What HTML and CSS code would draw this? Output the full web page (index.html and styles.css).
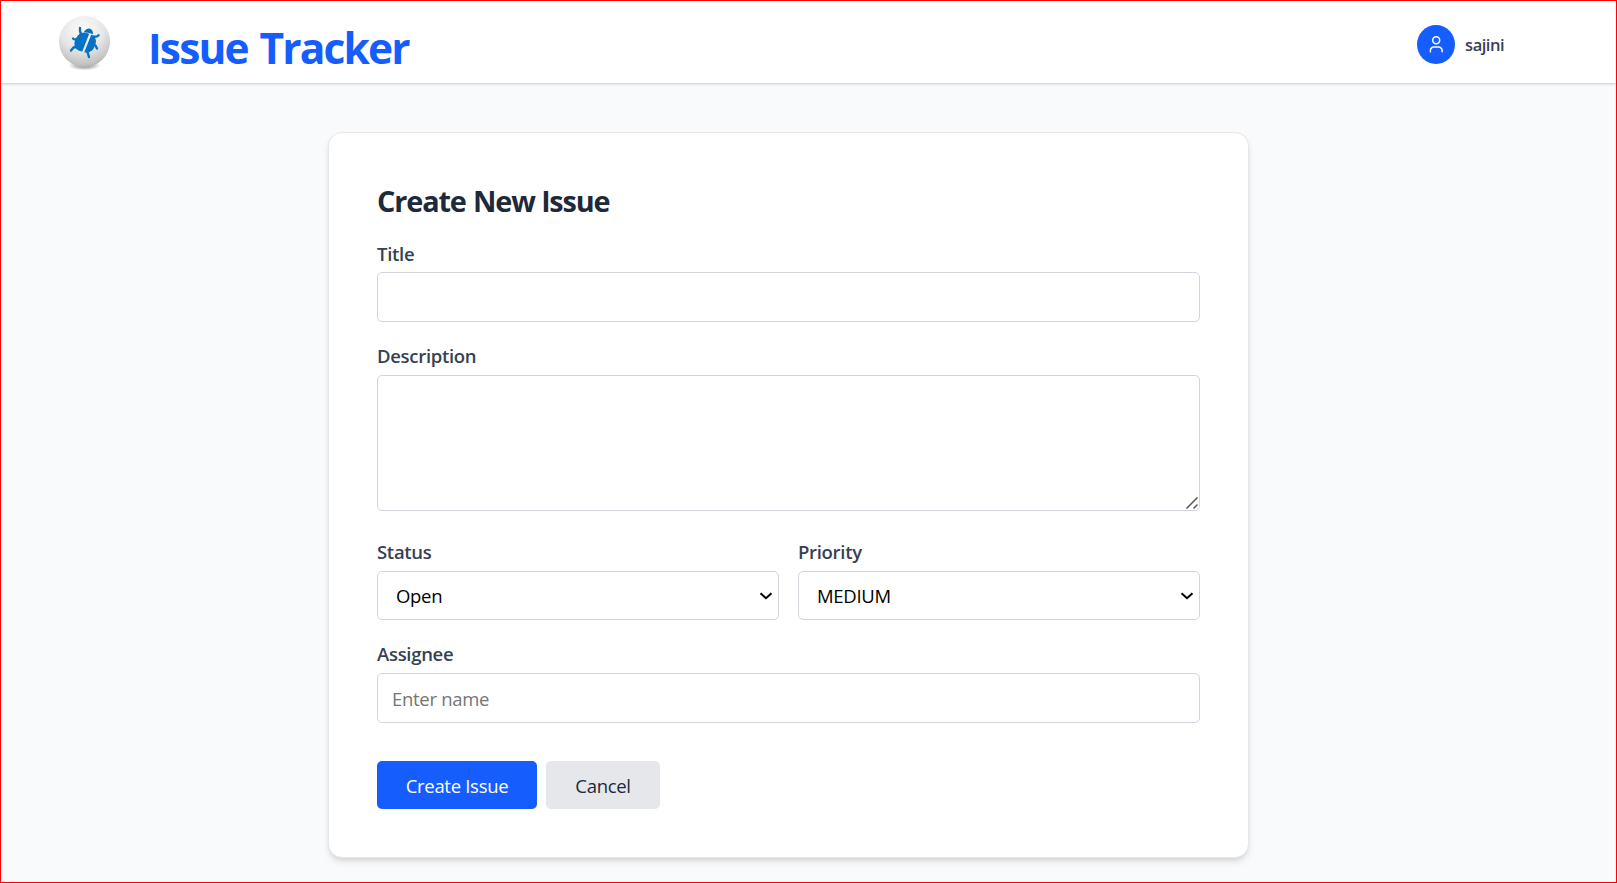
FILE: index.html
```html
<!DOCTYPE html>
<html lang="en">
<head>
<meta charset="utf-8">
<title>Issue Tracker</title>
<link rel="stylesheet" href="styles.css">
</head>
<body>
<div class="app">
  <header class="topbar">
    <div class="brand">
      <svg class="logo" width="56" height="60" viewBox="0 0 56 60">
        <defs>
          <radialGradient id="ball" cx=".46" cy=".25" r=".85">
            <stop offset="0" stop-color="#fbfbfb"/>
            <stop offset=".5" stop-color="#e6e6e6"/>
            <stop offset=".8" stop-color="#c4c4c4"/>
            <stop offset="1" stop-color="#a2a2a2"/>
          </radialGradient>
          <radialGradient id="floor"><stop offset="0" stop-color="#777"/><stop offset="1" stop-color="#777" stop-opacity="0"/></radialGradient>
        </defs>
        <ellipse cx="28.500" cy="50.500" rx="16" ry="5" fill="url(#floor)"/>
        <circle cx="28.500" cy="26.500" r="25.500" fill="url(#ball)"/>
        <g fill="#0572c4">
          <path d="M27.600 17.600Q29.500 13.800 33.500 13.600Q37.200 14.500 37 19.300Q32.500 17 27.600 17.600z"/>
          <path d="M33.200 18.700L26.300 36.500Q21 36 18.700 31.500Q17.500 27 20.500 22.500Q23 18 27 17.800Q30 17.600 33.200 18.700z"/>
          <path d="M35.300 19.500Q39.500 21.500 40 26Q39.500 32 36 35.500Q32.500 38.500 28.300 37.300z"/>
          <path d="M25.300 19.500Q23.500 17 24 13M37.500 21.500Q40 22.500 42.500 20.300M20.500 24Q18.500 25 17 23.500M39.500 30.500L41 33.500M20 32L17.500 32.500L15 35.500M31.500 37L33 42" fill="none" stroke="#0572c4" stroke-width="2.400" stroke-linecap="round" stroke-linejoin="round"/>
        </g>
      </svg>
      <h1 class="brand-name"><span class="plain-i">I</span>ssue Tracker</h1>
    </div>
    <div class="user">
      <span class="avatar">
        <svg width="19" height="19" viewBox="0 0 19 19" fill="none" stroke="#fff" stroke-width="1.500" stroke-linecap="round"><circle cx="9.200" cy="5.300" r="3.500"/><path d="M3.400 16.800v-1.300a3.400 3.400 0 0 1 3.400-3.400h4.900a3.400 3.400 0 0 1 3.400 3.400v1.300"/></svg>
      </span>
      <span class="user-name">sajini</span>
    </div>
  </header>
  <main class="content">
    <form class="card">
      <h2 class="card-title">Create New <span class="plain-i">I</span>ssue</h2>
      <div class="field">
        <label class="label label-title" for="title">Title</label>
        <input class="control" id="title" type="text">
      </div>
      <div class="field field-description">
        <label class="label" for="description">Description</label>
        <div class="control-wrap">
          <textarea class="control area" id="description"></textarea>
          <svg class="grip" width="12" height="12" viewBox="0 0 12 12" stroke="#555" stroke-width="1.500"><path d="M.5 11.500L11.500.5M7.500 11.500L11.500 7.500"/></svg>
        </div>
      </div>
      <div class="pair">
        <div class="field">
          <label class="label" for="status">Status</label>
          <div class="control-wrap">
            <select class="control select" id="status"><option>Open</option></select>
            <svg class="chevron" width="14" height="8" viewBox="0 0 14 8" fill="none" stroke="#000" stroke-width="2"><path d="M1.500 1.200L7 6.200L12.500 1.200"/></svg>
          </div>
        </div>
        <div class="field">
          <label class="label" for="priority">Priority</label>
          <div class="control-wrap">
            <select class="control select" id="priority"><option>MEDIUM</option></select>
            <svg class="chevron" width="14" height="8" viewBox="0 0 14 8" fill="none" stroke="#000" stroke-width="2"><path d="M1.500 1.200L7 6.200L12.500 1.200"/></svg>
          </div>
        </div>
      </div>
      <div class="field field-assignee">
        <label class="label" for="assignee">Assignee</label>
        <input class="control" id="assignee" type="text" placeholder="Enter name">
      </div>
      <div class="actions">
        <button class="btn btn-primary" type="button">Create Issue</button>
        <button class="btn btn-secondary" type="button">Cancel</button>
      </div>
    </form>
  </main>
</div>
</body>
</html>
```
FILE: styles.css
```css
* { box-sizing: border-box; margin: 0; }
body { font-family: "Open Sans", "Noto Sans", sans-serif; background: #f9fafb; }
.app {
  height: 100vh;
  border: 1px solid #f00;
  overflow: hidden;
  background: #f9fafb;
}
.topbar {
  display: flex;
  justify-content: space-between;
  height: 82px;
  padding: 0 112px 0 55px;
  background: #fff;
  box-shadow: 0 1px 3px rgba(0, 0, 0, .1), 0 1px 2px rgba(0, 0, 0, .1);
}
.brand { display: flex; gap: 37px; }
.logo { margin-top: 14px; }
.brand-name {
  padding-top: 17px;
  font-size: 42.500px;
  line-height: 60px;
  font-weight: 700;
  letter-spacing: -1.850px;
  word-spacing: 2.500px;
  color: #155dfc;
}
.plain-i { font-family: Inter, sans-serif; font-size: .98em; line-height: 1; letter-spacing: -.02em; }
.user { display: flex; align-items: center; gap: 10px; height: 86px; }
.avatar {
  display: flex;
  align-items: center;
  justify-content: center;
  width: 38px;
  height: 39px;
  border-radius: 50%;
  background: #155dfc;
}
.user-name { font-size: 16.500px; font-weight: 600; color: #364153; letter-spacing: -.5px; }
.content { padding: 49px 367px 0 327px; }
.card {
  height: 726px;
  padding: 46px 48px 0;
  border: 1px solid #e5e7eb;
  border-radius: 14px;
  background: #fff;
  box-shadow: 0 5px 7px -1px rgba(0, 0, 0, .1), 0 2px 5px -2px rgba(0, 0, 0, .1);
}
.card-title {
  height: 60px;
  font-size: 28.800px;
  line-height: 43px;
  font-weight: 700;
  letter-spacing: -1.100px;
  word-spacing: .8px;
  color: #1e2939;
}
.field { display: flex; flex-direction: column; }
.label {
  height: 33px;
  font-size: 18.500px;
  line-height: 27px;
  font-weight: 600;
  letter-spacing: -.3px;
  color: #364153;
}
.label-title { line-height: 30px; }
.control-wrap { position: relative; display: flex; }
.control {
  width: 100%;
  height: 50px;
  padding: 0 14px;
  border: 1px solid #d1d5dc;
  border-radius: 5px;
  background: #fff;
  font-family: inherit;
  font-size: 18.500px;
  letter-spacing: -.3px;
  color: #000;
  outline: none;
}
.control::placeholder { color: #757575; }
.area { height: 136px; resize: none; }
.grip { position: absolute; right: 2px; bottom: 2px; }
.chevron { position: absolute; right: 6px; top: 21px; pointer-events: none; }
.field-description { margin-top: 20px; }
.pair { display: grid; grid-template-columns: 1fr 1fr; gap: 19px; margin-top: 27px; }
.select { height: 49px; padding: 0 18px; appearance: none; }
.field-assignee { margin-top: 20px; }
.actions { display: flex; gap: 9px; margin-top: 38px; }
.btn {
  height: 48px;
  padding: 0;
  border: 0;
  border-radius: 5px;
  font-family: inherit;
  font-size: 18.500px;
  letter-spacing: -.3px;
}
.btn-primary { width: 160px; background: #155dfc; color: #fff; }
.btn-secondary { width: 114px; background: #e5e7eb; color: #1e2939; }
```
